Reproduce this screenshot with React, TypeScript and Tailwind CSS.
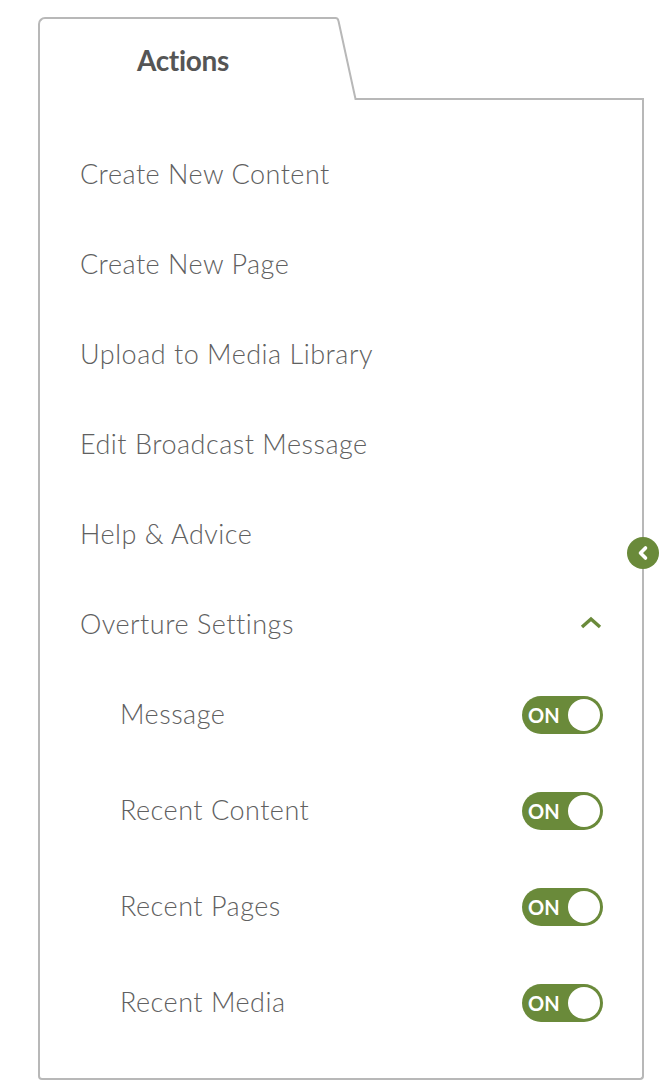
import React from "react";

const GREEN = "bg-[#6a8a3a]";

const mainItems = [
  "Create New Content",
  "Create New Page",
  "Upload to Media Library",
  "Edit Broadcast Message",
  "Help & Advice",
];

const settings = ["Message", "Recent Content", "Recent Pages", "Recent Media"];

function Toggle() {
  return (
    <div
      className={`mt-[3px] flex h-[38px] w-[81px] items-center justify-between rounded-full ${GREEN} pl-[6px] pr-[3px]`}
    >
      <span className="text-[20px] font-bold leading-none tracking-normal text-white">ON</span>
      <span className="h-[32px] w-[32px] rounded-full bg-white" />
    </div>
  );
}

export default function App() {
  return (
    <div
      className="min-h-[1090px] bg-white pl-[38px] pt-[17px] text-[#606060]"
      style={{ fontFamily: "Lato, 'Open Sans', sans-serif" }}
    >
      <div className="w-[606px]">
        {/* tab row */}
        <div className="flex h-[83px]">
          <div className="flex w-[296px] items-center justify-center rounded-tl-[7px] border-l-2 border-t-2 border-[#b8b8b8] pr-[8px] pt-[1px]">
            <span className="text-[28px] font-bold tracking-[-0.3px] text-[#555]">
              Actions
            </span>
          </div>
          <svg width="23" height="83" viewBox="0 0 23 83" className="shrink-0">
            <path
              d="M0 1 H1.5 Q4 1 4.5 4 L21.5 82 H23"
              fill="none"
              stroke="#b8b8b8"
              strokeWidth="2"
            />
          </svg>
          <div className="flex-1 rounded-tr-[3px] border-b-2 border-[#b8b8b8]" />
        </div>

        {/* body */}
        <div className="relative rounded-b-[4px] border-x-2 border-b-2 border-[#b8b8b8] pb-[29px] pl-[40px] pr-[39px] pt-[28px] text-[27px] font-light tracking-[0.5px]">
          {mainItems.map((item) => (
            <div key={item} className="flex h-[90px] items-center pt-[3px]">
              <span>{item}</span>
            </div>
          ))}
          <div className="flex h-[90px] items-center justify-between pt-[3px]">
            <span>Overture Settings</span>
            <svg width="22" height="14" viewBox="0 0 22 14" className="mr-[1px] -mt-[3px]">
              <path
                d="M2 11 L11 3 L20 11"
                fill="none"
                stroke="#6a8a3a"
                strokeWidth="3.4"
              />
            </svg>
          </div>
          <div className="-mt-[3px]">
            {settings.map((s) => (
              <div key={s} className="flex h-[96px] items-center justify-between pl-[40px]">
                <span className="pt-[3px]">{s}</span>
                <Toggle />
              </div>
            ))}
          </div>

          <button
            type="button"
            aria-label="Collapse"
            className={`absolute right-[-17px] top-[437px] flex h-[32px] w-[32px] items-center justify-center rounded-full ${GREEN}`}
          >
            <svg width="14" height="16" viewBox="0 0 14 16">
              <path
                d="M9.5 3 L4.5 8 L9.5 13"
                fill="none"
                stroke="white"
                strokeWidth="3.6"
                strokeLinecap="round"
                strokeLinejoin="round"
              />
            </svg>
          </button>
        </div>
      </div>
    </div>
  );
}
